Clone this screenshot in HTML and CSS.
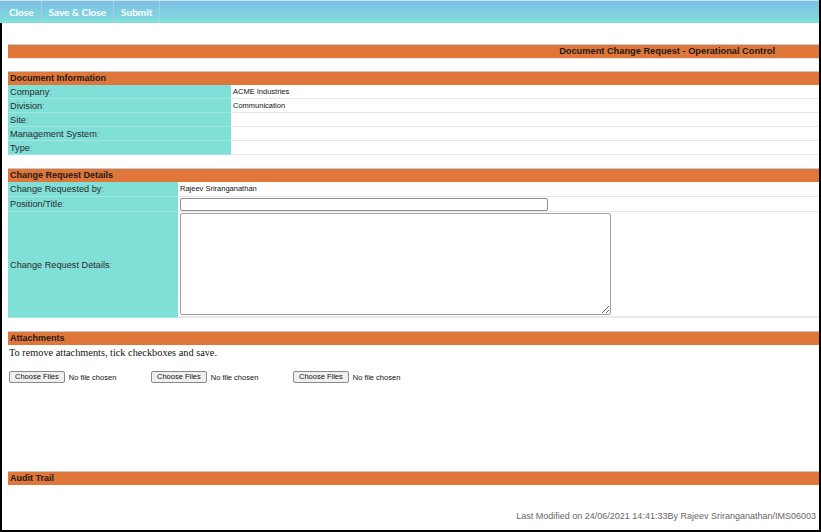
FILE: index.html
```html
<!DOCTYPE html>
<html>
<head>
<meta charset="utf-8">
<link rel="stylesheet" href="styles.css">
</head>
<body>
<div class="frame">
  <div class="toolbar">
    <span class="tb-item">Close</span>
    <span class="tb-item">Save &amp; Close</span>
    <span class="tb-item">Submit</span>
  </div>
  <div class="content">
    <div class="bar title-bar"><span>Document Change Request - Operational Control</span></div>

    <div class="bar">Document Information</div>
    <div class="grid info">
      <div class="lbl">Company<i>:</i></div><div class="val">ACME Industries</div>
      <div class="lbl">Division<i>:</i></div><div class="val">Communication</div>
      <div class="lbl">Site<i>:</i></div><div class="val"></div>
      <div class="lbl">Management System<i>:</i></div><div class="val"></div>
      <div class="lbl">Type<i>:</i></div><div class="val"></div>
    </div>

    <div class="bar">Change Request Details</div>
    <div class="grid details">
      <div class="lbl">Change Requested by<i>:</i></div><div class="val">Rajeev Sriranganathan</div>
      <div class="lbl">Position/Title<i>:</i></div><div class="val"><input class="txt" type="text"></div>
      <div class="lbl tall">Change Request Details<i>:</i></div><div class="val last"><textarea class="area"></textarea></div>
    </div>

    <div class="bar">Attachments</div>
    <p class="note">To remove attachments, tick checkboxes and save.</p>
    <div class="files">
      <div class="file"><span class="btn">Choose Files</span><span class="nf">No file chosen</span></div>
      <div class="file"><span class="btn">Choose Files</span><span class="nf">No file chosen</span></div>
      <div class="file"><span class="btn">Choose Files</span><span class="nf">No file chosen</span></div>
    </div>

    <div class="bar audit">Audit Trail</div>
    <div class="footer">Last Modified on 24/06/2021 14:41:33By Rajeev Sriranganathan/IMS06003</div>
  </div>
</div>
</body>
</html>
```

FILE: styles.css
```css
html, body {
  margin: 0;
  padding: 0;
  background: #fff;
}
.frame {
  width: 821px;
  height: 532px;
  box-sizing: border-box;
  border-right: 2px solid #000;
  border-bottom: 2px solid #000;
  display: flex;
  flex-direction: column;
  overflow: hidden;
  font-family: "Liberation Sans", Arial, sans-serif;
}
.toolbar {
  height: 23px;
  flex: none;
  display: flex;
  align-items: stretch;
  background: linear-gradient(to bottom, #7dbfe6 0%, #80d6de 75%, #83e2d6 100%);
  border-top: 1px solid #cfe6f2;
  box-sizing: border-box;
}
.tb-item {
  display: flex;
  align-items: center;
  padding: 0 7px 0 7px;
  color: #fff;
  font-family: Lato, "Liberation Sans", sans-serif;
  font-weight: bold;
  font-size: 10px;
  border-right: 1px solid #a3d3e2;
}
.tb-item:first-child { padding-left: 9px; padding-right: 7px; }
.content {
  flex: 1;
  border-left: 2px solid #000;
  padding: 21px 0 0 6px;
  display: flex;
  flex-direction: column;
}
.bar {
  height: 13px;
  flex: none;
  background: #df773a;
  border-top: 1px solid #c9c9c9;
  color: #1e1a17;
  font-weight: bold;
  font-size: 9px;
  line-height: 13px;
  padding-left: 2px;
  margin-top: 13px;
}
.bar:first-child { margin-top: 0; }
.title-bar {
  text-align: right;
  padding-right: 44px;
  border-bottom: 1px solid #e4e4e4;
  margin-bottom: -1px;
  font-size: 9.25px;
}
.grid {
  display: grid;
  font-size: 9.2px;
}
.info { grid-template-columns: 223px 1fr; grid-auto-rows: 14px; }
.details { grid-template-columns: 170px 1fr; }
.lbl {
  background: #80e0d8;
  color: #2a2a2a;
  padding-left: 2px;
  line-height: 14px;
  border-bottom: 1px solid #9ee8e2;
  box-sizing: border-box;
}
.lbl i { font-style: normal; color: #8a8a8a; }
.val {
  border-bottom: 1px solid #e6e6e6;
  box-sizing: border-box;
  font-size: 7.5px;
  color: #111;
  padding-left: 2px;
  line-height: 13px;
}
.details .lbl, .details .val { height: 15px; line-height: 14px; }
.details .lbl.tall, .details .val.last {
  height: 106px;
}
.details .lbl.tall { display: flex; align-items: center; }
.details .val.last { padding-top: 1px; border-bottom: 2px solid #e9e9e9; }
.txt {
  display: block;
  margin: 1px 0 0 0;
  width: 368px;
  height: 13px;
  box-sizing: border-box;
  border: 1px solid #8f8f8f;
  border-radius: 2px;
  padding: 0;
}
.area {
  display: block;
  width: 431px;
  height: 102px;
  box-sizing: border-box;
  margin: 0;
  border: 1px solid #a0a0a0;
  border-radius: 2px;
  padding: 0;
}
.note {
  margin: 2px 0 0 1px;
  font-family: "Liberation Serif", "Times New Roman", serif;
  font-size: 10.3px;
  color: #111;
  line-height: 12px;
}
.files {
  display: flex;
  margin: 12px 0 0 1px;
}
.file {
  width: 142px;
  display: flex;
  align-items: center;
  font-size: 7.5px;
  color: #111;
}
.btn {
  height: 12px;
  box-sizing: border-box;
  padding: 0 5px;
  border: 1px solid #8a8a8a;
  border-radius: 2px;
  background: #efefef;
  color: #111;
  font-size: 7.5px;
  line-height: 10px;
  margin-right: 4px;
}
.audit { margin-top: 88px; }
.footer {
  margin-top: 26px;
  text-align: right;
  font-size: 9px;
  color: #666;
  padding-right: 3px;
}
```
